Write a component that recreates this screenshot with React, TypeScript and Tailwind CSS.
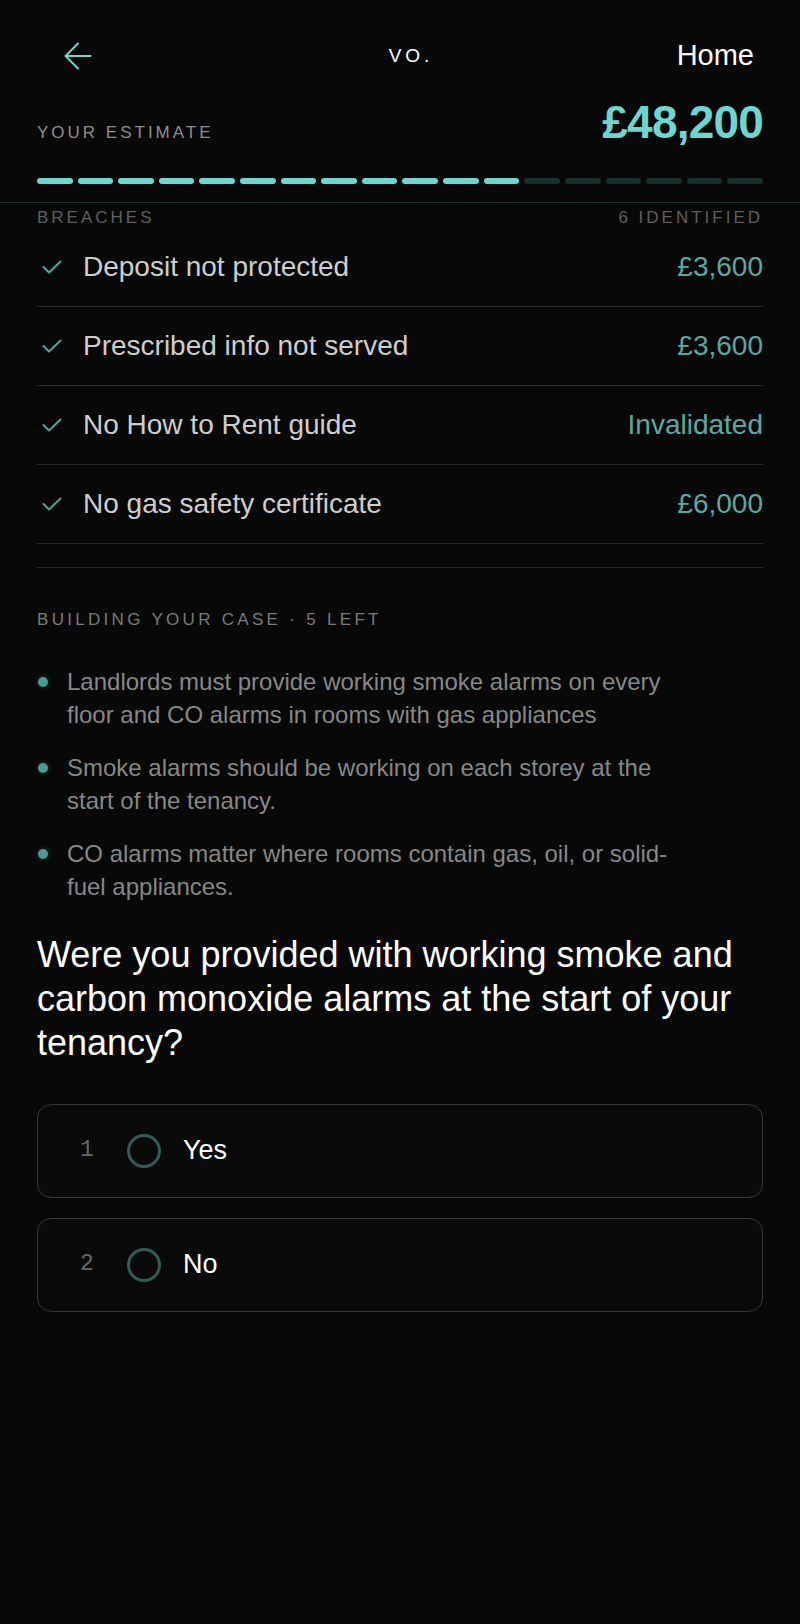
import React from 'react';

const segments = Array.from({ length: 18 }, (_, i) => i < 12);

const breaches = [
  { label: 'Deposit not protected', value: '£3,600' },
  { label: 'Prescribed info not served', value: '£3,600' },
  { label: 'No How to Rent guide', value: 'Invalidated' },
  { label: 'No gas safety certificate', value: '£6,000' },
];

const tips = [
  'Landlords must provide working smoke alarms on every floor and CO alarms in rooms with gas appliances',
  'Smoke alarms should be working on each storey at the start of the tenancy.',
  'CO alarms matter where rooms contain gas, oil, or solid-fuel appliances.',
];

const options = ['Yes', 'No'];

function Check() {
  return (
    <svg width="20" height="14" viewBox="0 0 20 14" fill="none">
      <polyline points="1.5,7 7,12.5 18.5,1.5" stroke="#4fa69c" strokeWidth="2" strokeLinecap="round" strokeLinejoin="round" />
    </svg>
  );
}

export default function App() {
  return (
    <div className="min-h-screen bg-[#080808] font-['Liberation_Sans',Arial,sans-serif] text-white">
      <header className="border-b border-[#1c3431] pb-[18px] pt-[34px]">
        <div className="grid h-[42px] grid-cols-[1fr_auto_1fr] items-center pl-[64px] pr-[46px]">
          <button className="flex items-center">
            <svg width="28" height="28" viewBox="0 0 28 28" fill="none">
              <path d="M26.5 14H1.5M14 1.5 1.5 14 14 26.5" stroke="#6dd6cf" strokeWidth="2" strokeLinecap="round" strokeLinejoin="round" />
            </svg>
          </button>
          <div className="pl-[4px] text-[19px] tracking-[4px] text-white">VO.</div>
          <div className="text-right text-[29px] text-white">Home</div>
        </div>

        <div className="mt-[23px] flex items-baseline justify-between px-[37px]">
          <span className="text-[17px] tracking-[3px] text-[#8e8e8e]">YOUR ESTIMATE</span>
          <span className="text-[46px] font-bold leading-none tracking-[-0.8px] text-[#6dd6cf]">£48,200</span>
        </div>

        <div className="mt-[32px] flex gap-[5px] px-[37px]">
          {segments.map((on, i) => (
            <div key={i} className={on ? 'h-[6px] flex-1 rounded-full bg-[#6dd6cf]' : 'h-[6px] flex-1 rounded-full bg-[#17302c]'} />
          ))}
        </div>
      </header>

      <main className="px-[37px]">
        <section className="border-b border-[#25292a] pb-[23px] pt-[5px]">
          <div className="flex justify-between text-[17px] leading-[20px] tracking-[3px] text-[#5f5f5f]">
            <span>BREACHES</span>
            <span>6 IDENTIFIED</span>
          </div>
          {breaches.map((b) => (
            <div key={b.label} className="flex h-[79px] items-center justify-between border-b border-[#25292a]">
              <div className="flex items-center gap-[21px] pl-[5px]">
                <Check />
                <span className="text-[28px] text-[#cdcdcd]">{b.label}</span>
              </div>
              <span className="text-[28px] text-[#5aa8a0]">{b.value}</span>
            </div>
          ))}
        </section>

        <section className="pt-[42px]">
          <div className="text-[17px] leading-[20px] tracking-[3.3px] text-[#7a7a7a]">BUILDING YOUR CASE · 5 LEFT</div>
          <ul className="mt-[35px] flex flex-col gap-[20px]">
            {tips.map((t) => (
              <li key={t} className="flex gap-[19px]">
                <span className="ml-[1px] mt-[12px] h-[10px] w-[10px] shrink-0 rounded-full bg-[#4a9b91] shadow-[0_0_6px_rgba(74,155,145,0.35)]" />
                <p className="w-[622px] text-[24px] leading-[33px] text-[#878787]">{t}</p>
              </li>
            ))}
          </ul>
        </section>

        <h2 className="mt-[30px] text-[36px] leading-[44px] text-white">
          Were you provided with working smoke and carbon monoxide alarms at the start of your tenancy?
        </h2>

        <div className="mt-[39px] flex flex-col gap-[20px]">
          {options.map((o, i) => (
            <button
              key={o}
              className="flex h-[94px] items-center rounded-[14px] border-[1.5px] border-[#383838] bg-[#0a0a0a] pl-[42px] text-left"
            >
              <span className="w-[14px] font-['Liberation_Mono',monospace] text-[23px] text-[#666666]">{i + 1}</span>
              <span className="ml-[33px] h-[34px] w-[34px] rounded-full border-[3px] border-[#2f5d57]" />
              <span className="ml-[22px] text-[27px] text-white">{o}</span>
            </button>
          ))}
        </div>
      </main>
    </div>
  );
}
